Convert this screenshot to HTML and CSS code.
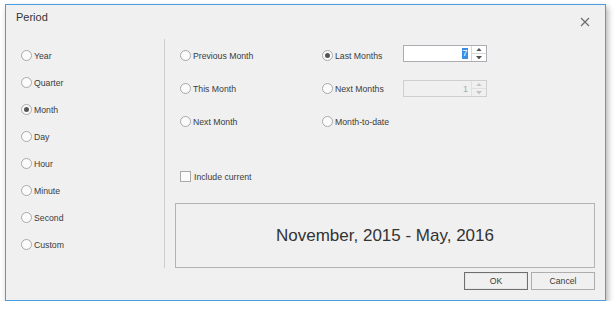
FILE: index.html
```html
<!DOCTYPE html>
<html>
<head>
<meta charset="utf-8">
<link rel="stylesheet" href="styles.css">
</head>
<body>
<div class="dialog">
  <div class="titlebar">
    <span class="title">Period</span>
    <svg class="close" width="10" height="10" viewBox="0 0 10 10"><path d="M1 1 L9 9 M9 1 L1 9" stroke="#6e6e6e" stroke-width="1.2" fill="none"/></svg>
  </div>
  <div class="main">
    <div class="periods">
      <div class="opt"><span class="radio"></span><span>Year</span></div>
      <div class="opt"><span class="radio"></span><span>Quarter</span></div>
      <div class="opt"><span class="radio checked"></span><span>Month</span></div>
      <div class="opt"><span class="radio"></span><span>Day</span></div>
      <div class="opt"><span class="radio"></span><span>Hour</span></div>
      <div class="opt"><span class="radio"></span><span>Minute</span></div>
      <div class="opt"><span class="radio"></span><span>Second</span></div>
      <div class="opt"><span class="radio"></span><span>Custom</span></div>
    </div>
    <div class="sep"></div>
    <div class="details">
      <div class="options">
        <div class="opt2"><span class="radio"></span><span>Previous Month</span></div>
        <div class="opt2"><span class="radio checked"></span><span>Last Months</span></div>
        <div class="spin active">
          <div class="spin-val"><span class="sel">7</span></div>
          <div class="spin-btns">
            <div class="sb up"><svg width="7" height="4" viewBox="0 0 7 4"><path d="M3.5 0 L7 4 L0 4 Z" fill="#505050"/></svg></div>
            <div class="sb down"><svg width="7" height="4" viewBox="0 0 7 4"><path d="M0 0 L7 0 L3.5 4 Z" fill="#505050"/></svg></div>
          </div>
        </div>
        <div class="opt2"><span class="radio"></span><span>This Month</span></div>
        <div class="opt2"><span class="radio"></span><span>Next Months</span></div>
        <div class="spin disabled">
          <div class="spin-val"><span>1</span></div>
          <div class="spin-btns">
            <div class="sb up"><svg width="7" height="4" viewBox="0 0 7 4"><path d="M3.5 0 L7 4 L0 4 Z" fill="#c4c4c4"/></svg></div>
            <div class="sb down"><svg width="7" height="4" viewBox="0 0 7 4"><path d="M0 0 L7 0 L3.5 4 Z" fill="#c4c4c4"/></svg></div>
          </div>
        </div>
        <div class="opt2"><span class="radio"></span><span>Next Month</span></div>
        <div class="opt2"><span class="radio"></span><span>Month-to-date</span></div>
        <div></div>
      </div>
      <div class="include"><span class="check"></span><span>Include current</span></div>
      <div class="range">November, 2015 - May, 2016</div>
    </div>
  </div>
  <div class="footer">
    <div class="btn default">OK</div>
    <div class="btn">Cancel</div>
  </div>
</div>
</body>
</html>
```
FILE: styles.css
```css
html, body {
  margin: 0;
  padding: 0;
  background: #ffffff;
}
body {
  font-family: "Liberation Sans", Arial, sans-serif;
  color: #3b3b3b;
}
.dialog {
  margin: 4px 0 0 5px;
  width: 599px;
  height: 295px;
  border: 1px solid #4c9de0;
  background: #f0f0f0;
  box-shadow: 2px 3px 6px rgba(0, 0, 0, 0.3);
  display: flex;
  flex-direction: column;
}
.titlebar {
  height: 34px;
  display: flex;
  justify-content: space-between;
  align-items: flex-start;
  box-sizing: border-box;
  padding: 6px 15px 0 10px;
}
.title {
  font-size: 11px;
  line-height: 13px;
  color: #333;
}
.close {
  margin-top: 6px;
  display: block;
}
.main {
  display: flex;
  height: 230px;
}
.periods {
  width: 143px;
  padding: 3px 0 0 15px;
}
.opt {
  height: 27px;
  display: flex;
  align-items: center;
  gap: 2px;
  font-size: 8.7px;
}
.radio {
  width: 9px;
  height: 9px;
  border: 1px solid #a9a9a9;
  border-radius: 50%;
  background: #fbfbfb;
  display: flex;
  align-items: center;
  justify-content: center;
  flex: none;
}
.radio.checked::after {
  content: "";
  width: 5px;
  height: 5px;
  border-radius: 50%;
  background: #555;
}
.sep {
  width: 1px;
  height: 229px;
  background: #cdcdcd;
}
.details {
  flex: 1;
  display: flex;
  flex-direction: column;
  padding-left: 15px;
}
.options {
  display: grid;
  grid-template-columns: 142px 81px 84px;
  grid-template-rows: 33px 33px 33px;
}
.opt2 {
  display: flex;
  align-items: center;
  gap: 2px;
  font-size: 8.7px;
}
.spin {
  box-sizing: border-box;
  height: 17px;
  width: 84px;
  border: 1px solid #abadb3;
  display: flex;
  align-self: start;
  margin-top: 6px;
  background: #ffffff;
}
.spin.disabled {
  margin-top: 8px;
  border-color: #cfcfcf;
  background: #f0f0f0;
  color: #a8a8a8;
}
.spin-val {
  flex: 1;
  display: flex;
  align-items: center;
  justify-content: flex-end;
  padding-right: 3px;
  font-size: 9px;
}
.sel {
  background: #3a8ee6;
  color: #fff;
  line-height: 11px;
  padding: 0 0.5px;
}
.spin-btns {
  width: 14px;
  display: flex;
  flex-direction: column;
  border-left: 1px solid #d6d6d6;
}
.spin.disabled .spin-btns {
  border-left-color: #e0e0e0;
}
.sb {
  flex: 1;
  display: flex;
  align-items: center;
  justify-content: center;
}
.sb.up {
  border-bottom: 1px solid #d6d6d6;
}
.spin.disabled .sb.up {
  border-bottom-color: #e0e0e0;
}
.sb svg {
  display: block;
  width: 6px;
  height: 3.5px;
}
.include {
  margin-top: 33px;
  display: flex;
  align-items: center;
  gap: 3px;
  font-size: 8.7px;
  height: 11px;
}
.check {
  box-sizing: border-box;
  width: 11px;
  height: 11px;
  border: 1px solid #a9a9a9;
  background: #fbfbfb;
}
.range {
  margin: 21px 0 0 -5px;
  box-sizing: border-box;
  width: 420px;
  height: 65px;
  border: 1px solid #b4b4b4;
  display: flex;
  align-items: center;
  justify-content: center;
  font-size: 17px;
  color: #333;
}
.footer {
  display: flex;
  justify-content: flex-end;
  gap: 3px;
  padding: 3px 10px 0 0;
}
.btn {
  box-sizing: border-box;
  width: 64px;
  height: 18px;
  border: 1px solid #adadad;
  background: #f0f0f0;
  font-size: 8.7px;
  display: flex;
  align-items: center;
  justify-content: center;
  color: #3b3b3b;
}
.btn.default {
  border-color: #707070;
  box-shadow: inset 0 0 0 1px #e6e6e6;
}
```
